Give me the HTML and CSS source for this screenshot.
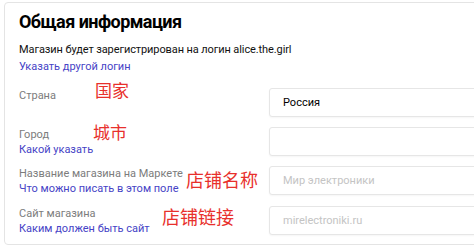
FILE: index.html
```html
<!DOCTYPE html>
<html lang="ru">
<head>
    <meta charset="UTF-8">
    <title>Общая информация</title>
    <link rel="stylesheet" href="styles.css">
</head>
<body>
    <div class="card">
        <h1>Общая информация</h1>
        <p class="intro">Магазин будет зарегистрирован на логин alice.the.girl</p>
        <a class="link link-login" href="#">Указать другой логин</a>

        <div class="rows">
            <div class="row">
                <div class="label">
                    <span>Страна</span>
                    <span class="note note-country">国家</span>
                </div>
                <input type="text" class="field" value="Россия">
            </div>

            <div class="row">
                <div class="label">
                    <span>Город</span>
                    <a class="link" href="#">Какой указать</a>
                    <span class="note note-city">城市</span>
                </div>
                <input type="text" class="field">
            </div>

            <div class="row">
                <div class="label">
                    <span>Название магазина на Маркете</span>
                    <a class="link" href="#">Что можно писать в этом поле</a>
                    <span class="note note-name">店铺名称</span>
                </div>
                <input type="text" class="field" placeholder="Мир электроники">
            </div>

            <div class="row">
                <div class="label">
                    <span>Сайт магазина</span>
                    <a class="link" href="#">Каким должен быть сайт</a>
                    <span class="note note-site">店铺链接</span>
                </div>
                <input type="text" class="field" placeholder="mirelectroniki.ru">
            </div>
        </div>
    </div>
</body>
</html>
```

FILE: styles.css
```css
body {
    margin: 0;
    background-color: #ffffff;
    font-family: Roboto, "Noto Sans", sans-serif;
    color: #000000;
    overflow: hidden;
}

.card {
    margin: 2px 0 0 4px;
    width: 520px;
    height: 243px;
    border: 1px solid #e4e4e4;
    border-radius: 4px;
    padding: 8px 0 0 14px;
    box-sizing: border-box;
}

h1 {
    margin: 0;
    font-size: 18px;
    line-height: 22px;
    font-weight: 700;
    letter-spacing: -0.55px;
}

.intro {
    margin: 9px 0 0;
    font-size: 11px;
    line-height: 15px;
    letter-spacing: -0.1px;
    color: #111111;
}

.link {
    display: block;
    color: #4643c6;
    text-decoration: none;
    font-size: 11px;
    line-height: 15px;
}

.link-login {
    margin-top: 2px;
}

.rows {
    display: flex;
    flex-direction: column;
    gap: 9.5px;
    margin-top: 14px;
}

.row {
    display: grid;
    grid-template-columns: 250px 1fr;
}

.label {
    position: relative;
    display: flex;
    flex-direction: column;
    color: #7c7c7c;
    font-size: 11px;
    line-height: 15px;
}

.field {
    height: 29px;
    border: 1px solid #e6e6e6;
    border-radius: 3px;
    padding: 0 13px;
    box-sizing: border-box;
    font-family: inherit;
    font-size: 11px;
    color: #000000;
    box-shadow: 0 1px 2px rgba(0, 0, 0, 0.04);
}

.field::placeholder {
    color: #c4c4c4;
}

/* red annotations drawn over the form */
.note {
    position: absolute;
    color: #e8302c;
    font-family: "Noto Sans CJK SC", sans-serif;
    line-height: 1;
}

.note-country {
    left: 76px;
    top: -7px;
    font-size: 17px;
}

.note-city {
    left: 74px;
    top: -4px;
    font-size: 17px;
}

.note-name {
    left: 167px;
    top: 4px;
    font-size: 18px;
}

.note-site {
    left: 143px;
    top: 1px;
    font-size: 18px;
}
```
